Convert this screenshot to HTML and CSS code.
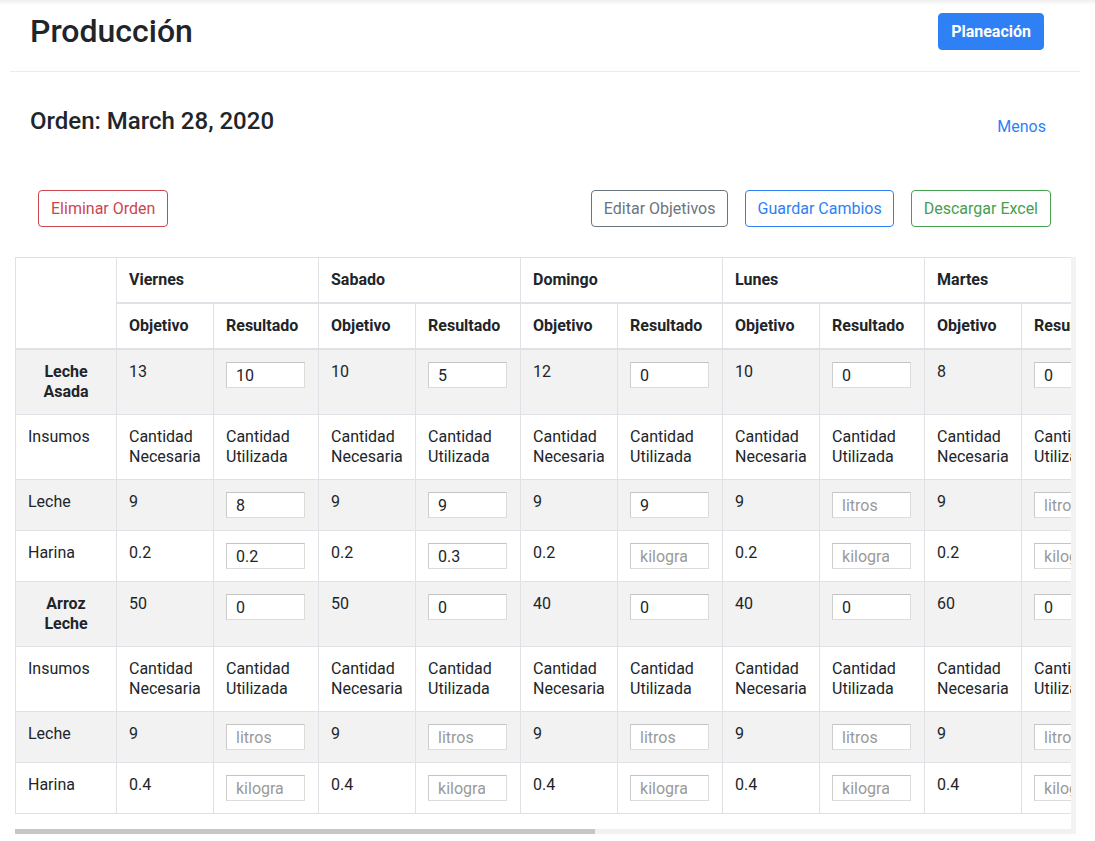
FILE: index.html
```html
<!DOCTYPE html>
<html lang="es">
<head>
<meta charset="utf-8">
<title>Producción</title>
<link rel="stylesheet" href="styles.css">
</head>
<body>
<div class="page">
  <header class="topbar">
    <h1 class="title">Producción</h1>
    <button class="btn btn-primary">Planeación</button>
  </header>

  <section class="order-head">
    <h2 class="order-title">Orden: March 28, 2020</h2>
    <a class="link" href="#">Menos</a>
  </section>

  <section class="actions">
    <button class="btn btn-outline-danger">Eliminar Orden</button>
    <div class="actions-right">
      <button class="btn btn-outline-secondary">Editar Objetivos</button>
      <button class="btn btn-outline-primary">Guardar Cambios</button>
      <button class="btn btn-outline-success">Descargar Excel</button>
    </div>
  </section>

  <div class="table-wrap">
    <div class="table-clip">
    <table class="grid">
      <colgroup>
        <col class="c-label">
        <col class="c-obj"><col class="c-res">
        <col class="c-obj"><col class="c-res">
        <col class="c-obj"><col class="c-res">
        <col class="c-obj"><col class="c-res">
        <col class="c-obj"><col class="c-res">
        <col class="c-obj"><col class="c-res">
        <col class="c-obj"><col class="c-res">
        <col class="c-obj"><col class="c-res">
        <col class="c-obj"><col class="c-res">
      </colgroup>
      <thead>
        <tr>
          <th rowspan="2"></th>
          <th colspan="2">Viernes</th>
          <th colspan="2">Sabado</th>
          <th colspan="2">Domingo</th>
          <th colspan="2">Lunes</th>
          <th colspan="2">Martes</th>
          <th colspan="2">Miercoles</th>
          <th colspan="2">Jueves</th>
          <th colspan="2">Viernes</th>
          <th colspan="2">Sabado</th>
        </tr>
        <tr>
          <th>Objetivo</th><th>Resultado</th>
          <th>Objetivo</th><th>Resultado</th>
          <th>Objetivo</th><th>Resultado</th>
          <th>Objetivo</th><th>Resultado</th>
          <th>Objetivo</th><th>Resultado</th>
          <th>Objetivo</th><th>Resultado</th>
          <th>Objetivo</th><th>Resultado</th>
          <th>Objetivo</th><th>Resultado</th>
          <th>Objetivo</th><th>Resultado</th>
        </tr>
      </thead>
      <tbody>
        <tr>
          <th class="product">Leche Asada</th>
          <td>13</td><td><input class="field" type="number" value="10"></td>
          <td>10</td><td><input class="field" type="number" value="5"></td>
          <td>12</td><td><input class="field" type="number" value="0"></td>
          <td>10</td><td><input class="field" type="number" value="0"></td>
          <td>8</td><td><input class="field" type="number" value="0"></td>
          <td>8</td><td><input class="field" type="number" value="0"></td>
          <td>10</td><td><input class="field" type="number" value="0"></td>
          <td>12</td><td><input class="field" type="number" value="0"></td>
          <td>10</td><td><input class="field" type="number" value="0"></td>
        </tr>
        <tr>
          <td>Insumos</td>
          <td>Cantidad Necesaria</td><td>Cantidad Utilizada</td>
          <td>Cantidad Necesaria</td><td>Cantidad Utilizada</td>
          <td>Cantidad Necesaria</td><td>Cantidad Utilizada</td>
          <td>Cantidad Necesaria</td><td>Cantidad Utilizada</td>
          <td>Cantidad Necesaria</td><td>Cantidad Utilizada</td>
          <td>Cantidad Necesaria</td><td>Cantidad Utilizada</td>
          <td>Cantidad Necesaria</td><td>Cantidad Utilizada</td>
          <td>Cantidad Necesaria</td><td>Cantidad Utilizada</td>
          <td>Cantidad Necesaria</td><td>Cantidad Utilizada</td>
        </tr>
        <tr>
          <td>Leche</td>
          <td>9</td><td><input class="field" type="number" value="8" placeholder="litros"></td>
          <td>9</td><td><input class="field" type="number" value="9" placeholder="litros"></td>
          <td>9</td><td><input class="field" type="number" value="9" placeholder="litros"></td>
          <td>9</td><td><input class="field" type="number" placeholder="litros"></td>
          <td>9</td><td><input class="field" type="number" placeholder="litros"></td>
          <td>9</td><td><input class="field" type="number" placeholder="litros"></td>
          <td>9</td><td><input class="field" type="number" placeholder="litros"></td>
          <td>9</td><td><input class="field" type="number" placeholder="litros"></td>
          <td>9</td><td><input class="field" type="number" placeholder="litros"></td>
        </tr>
        <tr>
          <td>Harina</td>
          <td>0.2</td><td><input class="field" type="number" value="0.2" placeholder="kilogramos"></td>
          <td>0.2</td><td><input class="field" type="number" value="0.3" placeholder="kilogramos"></td>
          <td>0.2</td><td><input class="field" type="number" placeholder="kilogramos"></td>
          <td>0.2</td><td><input class="field" type="number" placeholder="kilogramos"></td>
          <td>0.2</td><td><input class="field" type="number" placeholder="kilogramos"></td>
          <td>0.2</td><td><input class="field" type="number" placeholder="kilogramos"></td>
          <td>0.2</td><td><input class="field" type="number" placeholder="kilogramos"></td>
          <td>0.2</td><td><input class="field" type="number" placeholder="kilogramos"></td>
          <td>0.2</td><td><input class="field" type="number" placeholder="kilogramos"></td>
        </tr>
        <tr>
          <th class="product">Arroz Leche</th>
          <td>50</td><td><input class="field" type="number" value="0"></td>
          <td>50</td><td><input class="field" type="number" value="0"></td>
          <td>40</td><td><input class="field" type="number" value="0"></td>
          <td>40</td><td><input class="field" type="number" value="0"></td>
          <td>60</td><td><input class="field" type="number" value="0"></td>
          <td>50</td><td><input class="field" type="number" value="0"></td>
          <td>40</td><td><input class="field" type="number" value="0"></td>
          <td>50</td><td><input class="field" type="number" value="0"></td>
          <td>50</td><td><input class="field" type="number" value="0"></td>
        </tr>
        <tr>
          <td>Insumos</td>
          <td>Cantidad Necesaria</td><td>Cantidad Utilizada</td>
          <td>Cantidad Necesaria</td><td>Cantidad Utilizada</td>
          <td>Cantidad Necesaria</td><td>Cantidad Utilizada</td>
          <td>Cantidad Necesaria</td><td>Cantidad Utilizada</td>
          <td>Cantidad Necesaria</td><td>Cantidad Utilizada</td>
          <td>Cantidad Necesaria</td><td>Cantidad Utilizada</td>
          <td>Cantidad Necesaria</td><td>Cantidad Utilizada</td>
          <td>Cantidad Necesaria</td><td>Cantidad Utilizada</td>
          <td>Cantidad Necesaria</td><td>Cantidad Utilizada</td>
        </tr>
        <tr>
          <td>Leche</td>
          <td>9</td><td><input class="field" type="number" placeholder="litros"></td>
          <td>9</td><td><input class="field" type="number" placeholder="litros"></td>
          <td>9</td><td><input class="field" type="number" placeholder="litros"></td>
          <td>9</td><td><input class="field" type="number" placeholder="litros"></td>
          <td>9</td><td><input class="field" type="number" placeholder="litros"></td>
          <td>9</td><td><input class="field" type="number" placeholder="litros"></td>
          <td>9</td><td><input class="field" type="number" placeholder="litros"></td>
          <td>9</td><td><input class="field" type="number" placeholder="litros"></td>
          <td>9</td><td><input class="field" type="number" placeholder="litros"></td>
        </tr>
        <tr>
          <td>Harina</td>
          <td>0.4</td><td><input class="field" type="number" placeholder="kilogramos"></td>
          <td>0.4</td><td><input class="field" type="number" placeholder="kilogramos"></td>
          <td>0.4</td><td><input class="field" type="number" placeholder="kilogramos"></td>
          <td>0.4</td><td><input class="field" type="number" placeholder="kilogramos"></td>
          <td>0.4</td><td><input class="field" type="number" placeholder="kilogramos"></td>
          <td>0.4</td><td><input class="field" type="number" placeholder="kilogramos"></td>
          <td>0.4</td><td><input class="field" type="number" placeholder="kilogramos"></td>
          <td>0.4</td><td><input class="field" type="number" placeholder="kilogramos"></td>
          <td>0.4</td><td><input class="field" type="number" placeholder="kilogramos"></td>
        </tr>
      </tbody>
    </table>
    </div>
    <div class="scroll-track">
      <div class="scroll-thumb" style="width: 54.9%"></div>
    </div>
  </div>
</div>
</body>
</html>
```

FILE: styles.css
```css
* { box-sizing: border-box; }

html, body {
  margin: 0;
  padding: 0;
}

body {
  background: #fff linear-gradient(#efefef, #fff) top left / 100% 5px no-repeat;
  font-family: Roboto, "Liberation Sans", Arial, sans-serif;
  color: #212529;
  font-size: 16px;
  line-height: 1.5;
}

.page {
  margin: 0 15px 0 10px;
}

/* ---------- header ---------- */
.topbar {
  display: flex;
  align-items: center;
  justify-content: space-between;
  padding: 13px 36px 21px 20px;
  border-bottom: 1px solid #e9ecef;
}

.title {
  margin: 0;
  font-size: 32px;
  font-weight: 500;
  line-height: 37px;
  color: #212529;
}

.btn {
  font-family: inherit;
  font-size: 16px;
  line-height: 23px;
  padding: 6px 12px;
  border: 1px solid transparent;
  border-radius: 4px;
  background: #fff;
  cursor: pointer;
}

.btn-primary {
  background: #2f7ff5;
  border-color: #2f7ff5;
  color: #fff;
  font-weight: 700;
  padding: 6px 12px;
}

.btn-outline-danger { color: #cc4650; border-color: #cc4650; }
.btn-outline-secondary { color: #6c757d; border-color: #6c757d; }
.btn-outline-primary { color: #2f7ff5; border-color: #2f7ff5; padding: 6px 11px; }
.btn-outline-success { color: #47a050; border-color: #47a050; }

/* ---------- order heading ---------- */
.order-head {
  display: flex;
  justify-content: space-between;
  align-items: flex-start;
  padding: 35px 34px 0 20px;
}

.order-title {
  margin: 0;
  font-size: 24px;
  font-weight: 500;
  line-height: 28px;
}

.link {
  margin-top: 8px;
  color: #2f7ff5;
  text-decoration: none;
  font-size: 16px;
  line-height: 24px;
}

/* ---------- actions ---------- */
.actions {
  display: flex;
  justify-content: space-between;
  align-items: center;
  padding: 51px 29px 0 28px;
}

.actions-right {
  display: flex;
  gap: 17px;
}

/* ---------- table ---------- */
.table-wrap {
  margin: 30px 4px 0 5px;
  border-right: 5px solid #f3f3f3;
}

.table-clip {
  overflow: hidden;
}

.scroll-track {
  height: 5px;
  background: #f1f1f1;
}

.scroll-thumb {
  height: 100%;
  background: #c6c6c6;
}

.grid {
  border-collapse: collapse;
  table-layout: fixed;
  width: 1919px;
  margin-bottom: 15px;
  color: #212529;
}

.c-label { width: 101px; }
.c-obj { width: 97px; }
.c-res { width: 105px; }

.grid th,
.grid td {
  border: 1px solid #dee2e6;
  padding: 12px;
  line-height: 20px;
  text-align: left;
  vertical-align: top;
  font-size: 16px;
}

.grid th { font-weight: 700; }

.grid thead th {
  border-bottom-width: 2px;
  background: #fff;
}

.grid tbody tr:nth-child(odd) {
  background: #f2f2f2;
}

.grid .product {
  text-align: center;
}

.field {
  display: block;
  width: 79px;
  height: 26px;
  margin: 0;
  padding: 0 6px 0 9px;
  font-family: inherit;
  font-size: 16px;
  color: #212529;
  background: #fff;
  border: 1px solid #dcdcdc;
  border-top-color: #c4c4c4;
  border-left-color: #cdcdcd;
  border-radius: 0;
  outline: none;
}

.field::placeholder {
  color: #9a9a9a;
}
```
